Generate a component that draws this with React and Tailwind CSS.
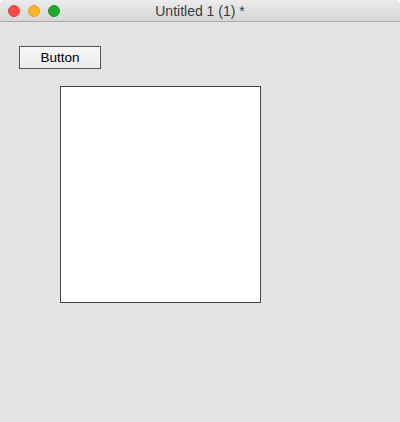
import React from 'react';

const App = () => {
  return (
    <div className="w-[400px] h-[422px] bg-white font-['Liberation_Sans',sans-serif]">
      <div className="w-full h-full flex flex-col rounded-t-[5px] overflow-hidden bg-[#e3e3e3]">
        {/* title bar */}
        <div className="h-[22px] relative flex items-center justify-center bg-gradient-to-b from-[#ececec] to-[#d6d6d6] border-b border-[#a9a9a9]">
          <div className="absolute left-[8px] top-[5px] flex gap-[8px]">
            <span className="w-[12px] h-[12px] rounded-full bg-[#fc4a44] border border-[#e0443e]" />
            <span className="w-[12px] h-[12px] rounded-full bg-[#fdb428] border border-[#dea123]" />
            <span className="w-[12px] h-[12px] rounded-full bg-[#1faa2c] border border-[#1a9a25]" />
          </div>
          <span className="text-[14px] text-[#3c3c3c] leading-none">Untitled 1 (1) *</span>
        </div>
        {/* content */}
        <div className="flex-1 flex flex-col pl-[19px] pt-[24px]">
          <button className="w-[82px] h-[23px] border border-[#555] bg-gradient-to-b from-[#f7f7f7] to-[#ececec] text-[13.5px] text-black leading-none">
            Button
          </button>
          <div className="ml-[41px] mt-[17px] w-[201px] h-[217px] bg-white border border-[#444]" />
        </div>
      </div>
    </div>
  );
};

export default App;
